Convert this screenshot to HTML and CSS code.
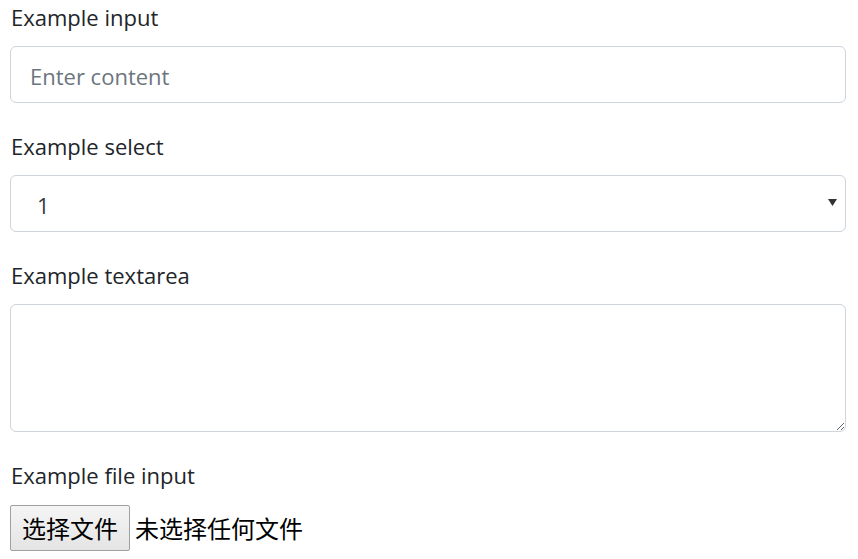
FILE: index.html
```html
<!DOCTYPE html>
<html lang="zh-CN">
<head>
<meta charset="utf-8">
<title>Form</title>
<link rel="stylesheet" href="styles.css">
</head>
<body>
<form class="form">
  <div class="form-group">
    <label class="label" for="in1">Example input</label>
    <input class="control" id="in1" type="text" placeholder="Enter content">
  </div>
  <div class="form-group">
    <label class="label" for="sel1">Example select</label>
    <div class="select-wrap">
      <select class="control select" id="sel1">
        <option>1</option>
        <option>2</option>
        <option>3</option>
      </select>
      <svg class="select-arrow" width="9" height="7" viewBox="0 0 9 7"><path d="M0 0H9L4.5 7Z" fill="#333"/></svg>
    </div>
  </div>
  <div class="form-group">
    <label class="label" for="ta1">Example textarea</label>
    <textarea class="control textarea" id="ta1" rows="3"></textarea>
  </div>
  <div class="form-group last">
    <label class="label">Example file input</label>
    <div class="file-row">
      <span class="file-btn">选择文件</span>
      <span class="file-text">未选择任何文件</span>
    </div>
  </div>
</form>
</body>
</html>
```

FILE: styles.css
```css
html, body {
  margin: 0;
  padding: 0;
  background: #fff;
}
body {
  font-family: "Open Sans", "Noto Sans CJK SC", sans-serif;
  font-size: 22px;
  line-height: 36px;
  color: #212529;
}
.form {
  margin-top: -2px;
  padding: 0 12px 0 10px;
}
.form-group {
  margin-bottom: 24px;
  display: flex;
  flex-direction: column;
}
.label {
  display: block;
  padding: 1px 0 0 1px;
  margin-bottom: 11px;
}
.control {
  display: block;
  box-sizing: border-box;
  width: 100%;
  height: 57px;
  padding: 10px 19px 8px;
  font: inherit;
  color: #495057;
  background: #fff;
  border: 1px solid #ced4da;
  border-radius: 6px;
  outline: none;
  margin: 0;
}
.control::placeholder {
  color: #6c757d;
  opacity: 1;
}
.select-wrap {
  position: relative;
}
.select {
  -webkit-appearance: none;
  appearance: none;
  padding-left: 26px;
  color: #343a40;
}
.select-arrow {
  position: absolute;
  right: 9px;
  top: 24px;
}
.textarea {
  height: 128px;
  resize: vertical;
}
.file-row {
  display: flex;
  align-items: center;
  gap: 5px;
  padding-top: 1px;
}
.file-btn {
  box-sizing: border-box;
  height: 46px;
  width: 120px;
  justify-content: center;
  display: flex;
  align-items: center;
  font-family: "Noto Sans CJK SC", sans-serif;
  font-size: 24px;
  color: #000;
  background: linear-gradient(#f5f5f5, #e4e4e4);
  border: 1px solid #a0a0a0;
  border-radius: 2px;
}
.file-text {
  font-family: "Noto Sans CJK SC", sans-serif;
  font-size: 24px;
  color: #000;
}
```
